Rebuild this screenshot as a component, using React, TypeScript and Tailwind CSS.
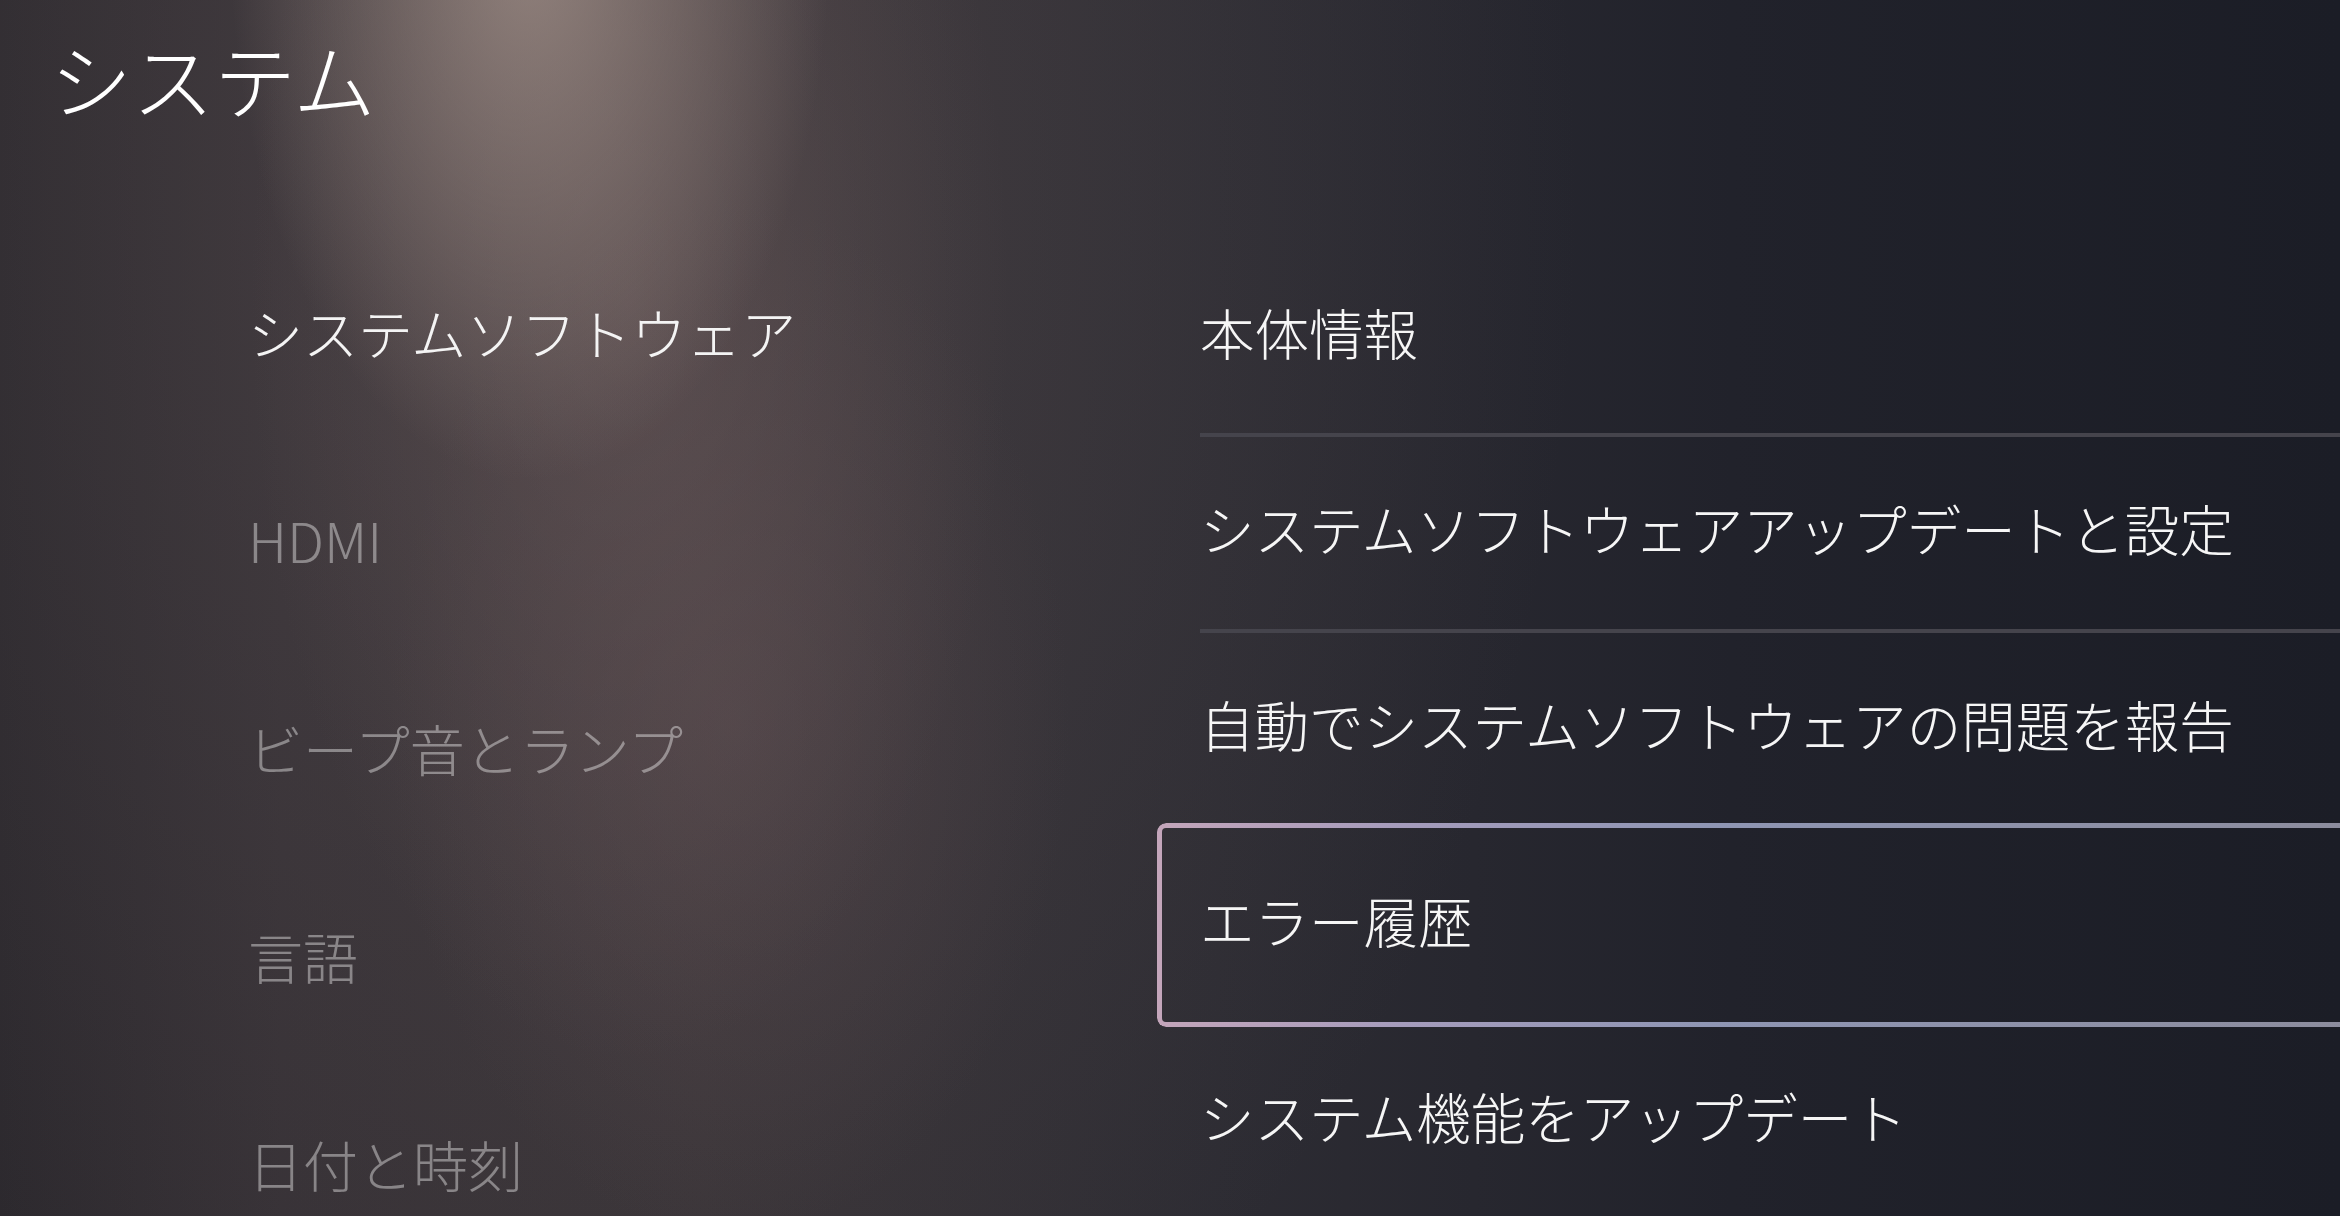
import React from 'react';

const leftItems = [
  { label: 'システムソフトウェア', active: true },
  { label: 'HDMI', active: false },
  { label: 'ビープ音とランプ', active: false },
  { label: '言語', active: false },
  { label: '日付と時刻', active: false },
];

const rightItems = [
  { label: '本体情報', divider: true },
  { label: 'システムソフトウェアアップデートと設定', divider: true },
  { label: '自動でシステムソフトウェアの問題を報告', divider: false },
  { label: 'エラー履歴', divider: false, focused: true },
  { label: 'システム機能をアップデート', divider: false },
];

const App: React.FC = () => {
  return (
    <div
      className="relative w-[2340px] h-[1216px] overflow-hidden text-white font-['Noto_Sans_CJK_JP','Noto_Sans',sans-serif] bg-[radial-gradient(ellipse_300px_540px_at_530px_-60px,rgba(168,150,142,0.75),rgba(168,150,142,0)_100%),radial-gradient(ellipse_380px_760px_at_630px_300px,rgba(120,100,100,0.38),rgba(120,100,100,0)_100%),radial-gradient(ellipse_340px_520px_at_730px_720px,rgba(95,78,82,0.45),rgba(95,78,82,0)_100%),radial-gradient(ellipse_1000px_1400px_at_580px_200px,rgba(90,80,82,0.42),rgba(90,80,82,0)_100%),linear-gradient(90deg,#2b282d_0%,#353035_12%,#383337_30%,#2d2c33_52%,#21222b_74%,#1b1d26_100%)]"
    >
      {/* Header */}
      <div className="pl-[50px] pt-[37px]">
        <h1 className="text-[82px] leading-none font-light">システム</h1>
      </div>

      <div className="flex mt-[108px]">
        {/* Left menu */}
        <div className="w-[1200px] pl-[248px] shrink-0">
          {leftItems.map(item => (
            <div key={item.label} className="h-[208px] flex items-center">
              <span
                className={`text-[55px] leading-none font-light ${
                  item.active ? 'text-[#f4f4f4]' : 'text-white/40'
                }`}
              >
                {item.label}
              </span>
            </div>
          ))}
        </div>

        {/* Right options */}
        <div className="flex-1 flex flex-col pt-[14px]">
          {rightItems.map(item => (
            <React.Fragment key={item.label}>
              <div className="relative h-[192px] flex items-center pb-[9px]">
                {item.focused && (
                  <div className="absolute -left-[43px] -right-[40px] -top-[6px] -bottom-[6px] rounded-[9px] p-[5px] bg-[linear-gradient(90deg,#c4a6bb_0%,#a59cbc_20%,#8f96b4_45%,#8c8c9c_100%)] [mask:linear-gradient(#000_0_0)_content-box_exclude,linear-gradient(#000_0_0)]" />
                )}
                <span className="relative text-[54.5px] leading-none font-light text-[#f6f6f6]">
                  {item.label}
                </span>
              </div>
              <div className={`h-[4px] ${item.divider ? 'bg-[#45444c]' : ''}`} />
            </React.Fragment>
          ))}
        </div>
      </div>
    </div>
  );
};

export default App;
